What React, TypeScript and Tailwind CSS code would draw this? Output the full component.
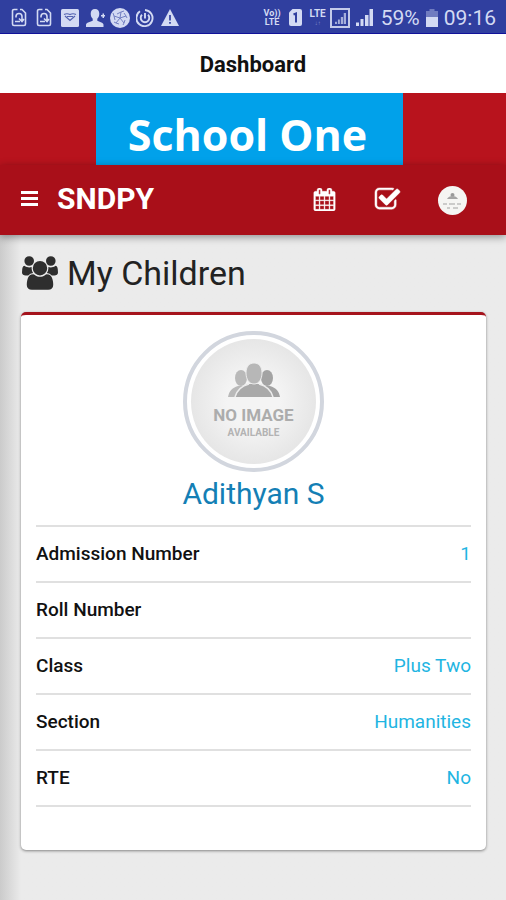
const details = [
  { label: "Admission Number", value: "1" },
  { label: "Roll Number", value: "" },
  { label: "Class", value: "Plus Two" },
  { label: "Section", value: "Humanities" },
  { label: "RTE", value: "No" },
];

function SyncDocIcon() {
  return (
    <svg viewBox="0 0 16 19" className="h-[19px] w-4" fill="none" stroke="currentColor" strokeWidth="1.6">
      <path d="M6.500 1.500H3a1.500 1.500 0 0 0-1.500 1.500v13A1.500 1.500 0 0 0 3 17.500h10a1.500 1.500 0 0 0 1.500-1.500V5L11 1.500H9" />
      <path d="M5 9.500V8.500a3 3 0 0 1 6 0v4M8 10.500l3 3 2-2.500M4 13.500h5" />
    </svg>
  );
}

function MailIcon() {
  return (
    <svg viewBox="0 0 18 18" className="size-[18px]">
      <rect width="18" height="18" rx="1.500" fill="currentColor" />
      <path d="M3 5.500c3-1.500 4-1 6 0 2-1 3-1.500 6 0M4 7l5 4.500L14 7M6 7.500h6" fill="none" stroke="#5362b0" strokeWidth="1.200" />
    </svg>
  );
}

function AddPersonIcon() {
  return (
    <svg viewBox="0 0 19 18" className="h-[18px] w-[19px]" fill="currentColor">
      <path d="M9 0c2.800 0 4.300 2 4.300 4.800 0 2.200-.8 4-2 5v1.900l4.700 2.100c1 .5 1.500 1.200 1.500 2.200v2H0v-2c0-1 .5-1.700 1.500-2.200l5.200-2.100V9.800c-1.200-1-2-2.800-2-5C4.700 2 6.200 0 9 0Z" />
      <path d="M15 6h1.500V4.500H18V6h1v1.500h-1V9h-1.500V7.500H15Z" />
    </svg>
  );
}

function BallIcon() {
  return (
    <svg viewBox="0 0 20 20" className="size-5">
      <circle cx="10" cy="10" r="10" fill="currentColor" />
      <path d="M10 10 11 4l3-1M10 10l6-2 1 2M10 10l4 5-1 2M10 10l-4 5-2-1M10 10 4 8 3 5M7 6l4-2M14 5l2 3M15 12l-1 3M9 16l-3-1M5 12 4 8" fill="none" stroke="#7380c2" strokeWidth="1" />
    </svg>
  );
}

function PowerIcon() {
  return (
    <svg viewBox="0 0 18 18" className="size-[18px]" fill="none" stroke="currentColor" strokeWidth="1.900">
      <path d="M4 2.300A8.100 8.100 0 1 0 9 1" />
      <path d="M6 5.800a4.300 4.300 0 1 0 6 0M9 4v5.500" />
    </svg>
  );
}

function WarningIcon() {
  return (
    <svg viewBox="0 0 18 17" className="h-[17px] w-[18px]">
      <path d="M9 0 18 17H0Z" fill="currentColor" />
      <path d="M9 6v5.500M9 13v1.800" stroke="#303f9f" strokeWidth="1.700" />
    </svg>
  );
}

function SignalBars({ className }: { className: string }) {
  return (
    <svg viewBox="0 0 17 17" className={className} fill="currentColor">
      <path d="M0 13.500h3V17H0ZM4.500 10h3v7h-3ZM9 6h3.500v11H9ZM13.500 0H17v17h-3.500Z" />
    </svg>
  );
}

function SimIcon() {
  return (
    <svg viewBox="0 0 13 17" className="h-[17px] w-[13px]">
      <path d="M3.500 0H11a2 2 0 0 1 2 2v13a2 2 0 0 1-2 2H2a2 2 0 0 1-2-2V3.500Z" fill="currentColor" />
      <path d="M4.500 5.500 7 4.500v9" fill="none" stroke="#303f9f" strokeWidth="2" />
    </svg>
  );
}

function BatteryIcon() {
  return (
    <svg viewBox="0 0 12 18" className="h-[18px] w-3" fill="currentColor">
      <path d="M3.500 0h5v2H12v6H0V2h3.500Z" opacity=".4" />
      <path d="M0 8h12v10H0Z" />
    </svg>
  );
}

function StatusBar() {
  return (
    <div className="flex h-[34px] items-center justify-between border-b border-[#11129a] bg-[#303f9f] pr-[10px] pl-[11px] text-[#d3daf3]">
      <div className="flex items-center gap-[7px] pt-0.5">
        <SyncDocIcon />
        <span className="ml-0.5 flex"><SyncDocIcon /></span>
        <span className="ml-0.5 flex"><MailIcon /></span>
        <AddPersonIcon />
        <span className="-ml-0.5 flex"><BallIcon /></span>
        <span className="-ml-px flex"><PowerIcon /></span>
        <WarningIcon />
      </div>
      <div className="flex items-center pt-0.5">
        <div className="text-center text-[9px] leading-[9px] font-bold">
          <div>Vo))</div>
          <div>LTE</div>
        </div>
        <span className="ml-2 flex"><SimIcon /></span>
        <div className="ml-2 text-center text-[10px] leading-[10px] font-bold">
          <div>LTE</div>
          <div className="text-[6px] leading-[8px] opacity-50">↓↑</div>
        </div>
        <div className="ml-1 flex size-5 items-end justify-end border-2 border-current p-0.5 opacity-90">
          <SignalBars className="size-[11px] opacity-80" />
        </div>
        <span className="ml-1.5 flex"><SignalBars className="size-[17px]" /></span>
        <span className="ml-2 text-[21px] leading-6">59%</span>
        <span className="ml-1.5 flex"><BatteryIcon /></span>
        <span className="ml-1.5 text-[21px] leading-6">09:16</span>
      </div>
    </div>
  );
}

function NavIcon({ label, path, className }: { label: string; path: string; className: string }) {
  return (
    <button type="button" aria-label={label} className="flex">
      <svg viewBox="0 0 1792 1792" className={className} fill="currentColor" stroke="currentColor" strokeWidth="30">
        <path d={path} />
      </svg>
    </button>
  );
}

const calendarPath =
  "M192 1664h288v-288h-288v288zm352 0h320v-288h-320v288zm-352-352h288v-320h-288v320zm352 0h320v-320h-320v320zm-352-384h288v-288h-288v288zm736 736h320v-288h-320v288zm-384-736h320v-288h-320v288zm768 736h288v-288h-288v288zm-384-352h320v-320h-320v320zm-352-864v-288q0-13-9.500-22.500t-22.500-9.500h-64q-13 0-22.500 9.500t-9.500 22.500v288q0 13 9.500 22.500t22.500 9.500h64q13 0 22.500-9.500t9.500-22.500zm736 864h288v-320h-288v320zm-384-384h320v-288h-320v288zm384 0h288v-288h-288v288zm32-480v-288q0-13-9.500-22.500t-22.500-9.500h-64q-13 0-22.500 9.500t-9.500 22.500v288q0 13 9.500 22.500t22.500 9.500h64q13 0 22.500-9.500t9.500-22.500zm384-64v1280q0 52-38 90t-90 38h-1408q-52 0-90-38t-38-90v-1280q0-52 38-90t90-38h128v-96q0-66 47-113t113-47h64q66 0 113 47t47 113v96h384v-96q0-66 47-113t113-47h64q66 0 113 47t47 113v96h128q52 0 90 38t38 90z";

const checkPath =
  "M1472 930v318q0 119-84.500 203.500t-203.500 84.500h-832q-119 0-203.500-84.500t-84.500-203.500v-832q0-119 84.500-203.500t203.500-84.500h832q63 0 117 25 15 7 18 23 3 17-9 29l-49 49q-10 10-23 10-3 0-9-2-23-6-45-6h-832q-66 0-113 47t-47 113v832q0 66 47 113t113 47h832q66 0 113-47t47-113v-254q0-13 9-22l64-64q10-10 23-10 6 0 12 3 20 8 20 29zm231-489l-814 814q-24 24-57 24t-57-24l-430-430q-24-24-24-57t24-57l110-110q24-24 57-24t57 24l263 263 647-647q24-24 57-24t57 24l110 110q24 24 24 57t-24 57z";

const groupPath =
  "M593 896q-162 5-265 128h-134q-82 0-138-40.500t-56-118.500q0-353 124-353 6 0 43.500 21t97.500 42.500 119 21.500q67 0 133-23-5 37-5 66 0 139 81 256zm1071 637q0 120-73 189.500t-194 69.500h-874q-121 0-194-69.500t-73-189.500q0-53 3.500-103.500t14-109 26.500-108.500 43-97.500 62-81 85.500-53.500 111.500-20q10 0 43 21.500t73 48 107 48 135 21.500 135-21.500 107-48 73-48 43-21.500q61 0 111.500 20t85.500 53.500 62 81 43 97.500 26.500 108.500 14 109 3.500 103.500zm-1024-1277q0 106-75 181t-181 75-181-75-75-181 75-181 181-75 181 75 75 181zm704 384q0 159-112.500 271.500t-271.500 112.500-271.500-112.500-112.500-271.500 112.500-271.500 271.500-112.500 271.500 112.500 112.500 271.500zm576 225q0 78-56 118.500t-138 40.500h-134q-103-123-265-128 81-117 81-256 0-29-5-66 66 23 133 23 59 0 119-21.500t97.500-42.500 43.500-21q124 0 124 353zm-128-609q0 106-75 181t-181 75-181-75-75-181 75-181 181-75 181 75 75 181z";

function PeopleGlyph({ className }: { className: string }) {
  return (
    <svg viewBox="0 0 54 36" className={className}>
      <g fill="#b9b9b9">
        <ellipse cx="14" cy="15" rx="6" ry="8" />
        <path d="M1 34c1-6 4-9 10-11h7v11Z" />
      </g>
      <g fill="#a3a3a3">
        <ellipse cx="40" cy="15" rx="6" ry="8" />
        <path d="M53 34c-1-6-4-9-10-11h-7v11Z" />
      </g>
      <path d="M8 34c2-7 6-11 14-13h10c8 2 12 6 14 13Z" fill="#a9a9a9" />
      <path d="M8 34c2-7 6-11 14-13M32 21c8 2 12 6 14 13" fill="none" stroke="#ececec" strokeWidth="1.500" />
      <path d="M27 0c5 0 8 4 8 10 0 6-3 11-8 11s-8-5-8-11c0-6 3-10 8-10Z" fill="#b7b7b7" stroke="#ececec" strokeWidth="1" />
    </svg>
  );
}

function Avatar() {
  return (
    <div className="size-[141px] rounded-full border-4 border-[#d2d6de] bg-white p-1">
      <div className="flex size-full flex-col items-center rounded-full bg-radial from-[#f4f4f4] from-30% to-[#dcdcdc] pt-6 font-bold">
        <PeopleGlyph className="h-[36px] w-[54px]" />
        <div className="mt-1.5 text-[17px] leading-5 text-[#acacac]">NO IMAGE</div>
        <div className="text-[10px] leading-4 text-[#b3b3b3]">AVAILABLE</div>
      </div>
    </div>
  );
}

export default function App() {
  return (
    <div className="flex min-h-screen flex-col bg-[#ebebeb] font-['Roboto',sans-serif] text-[#111]">
      <StatusBar />
      <div className="flex h-[59px] items-center justify-center bg-white pt-0.5">
        <h1 className="text-[22px] leading-7 font-bold text-[#111]">Dashboard</h1>
      </div>
      <div className="flex h-[72px] bg-[#b8131d] pr-[103px] pl-24">
        <div className="flex flex-1 items-center justify-center bg-[#01a1ea] pt-3 pr-1 font-['Open_Sans',sans-serif] text-[43px] leading-[60px] font-bold whitespace-nowrap text-white">
          School One
        </div>
      </div>
      <header className="relative flex h-[70px] items-center bg-[#a90f19] px-[21px] pb-0.5 text-white shadow-[0_2px_8px_rgba(0,0,0,0.4)]">
        <button type="button" aria-label="Menu" className="-mt-0.5 flex">
          <svg viewBox="0 0 17 15" className="h-[15px] w-[17px]" fill="currentColor">
            <path d="M0 0h17v3H0ZM0 6h17v3H0ZM0 12h17v3H0Z" />
          </svg>
        </button>
        <div className="ml-[19px] text-[30px] leading-9 font-bold">SNDPY</div>
        <div className="ml-auto flex items-center pr-[18px]">
          <NavIcon label="Calendar" path={calendarPath} className="size-[23px]" />
          <span className="ml-[38px] flex"><NavIcon label="Tasks" path={checkPath} className="size-[27px]" /></span>
          <button type="button" aria-label="Profile" className="mt-0.5 ml-[37px] flex rounded-full bg-[#f5f5f3]">
            <svg viewBox="0 0 29 29" className="size-[29px]">
              <circle cx="14.500" cy="9" r="2" fill="#999" />
              <path d="M9 13c1-2 3-3 5.500-3s4.500 1 5.500 3Z" fill="#a5a5a5" />
              <path d="M5 18h4M11 18h6M19 18h4M9 22h3M15 22h5" stroke="#bdbdbd" strokeWidth="1.300" />
            </svg>
          </button>
        </div>
      </header>
      <main className="flex-1 bg-linear-to-r from-[#cbcbcb] to-[#ebebeb] to-[21px] px-5 pb-[50px]">
        <h2 className="flex h-[77px] items-center gap-[9px] pb-0.5 pl-0.5 text-[34px] leading-10 font-normal text-[#222]">
          <svg viewBox="0 0 1920 1792" className="h-[34px] w-9" fill="#2e2e2e">
            <path d={groupPath} />
          </svg>
          My Children
        </h2>
        <section className="ml-px rounded-[5px] border-t-[3px] border-[#a5131c] bg-white px-[15px] pt-4 pb-[43px] shadow-[0_1px_3px_rgba(0,0,0,0.45)]">
          <div className="flex flex-col items-center">
            <Avatar />
            <a href="#adithyan" className="mt-0.5 mb-[11px] text-[30px] leading-10 text-[#147fb5]">
              Adithyan S
            </a>
          </div>
          <dl className="border-t-2 border-[#e0e0e0] text-[19px] leading-6">
            {details.map((row) => (
              <div key={row.label} className="flex h-14 items-center justify-between border-b-2 border-[#e0e0e0]">
                <dt className="font-medium text-[#111]">{row.label}</dt>
                <dd className="text-[#1fb5e2]">{row.value}</dd>
              </div>
            ))}
          </dl>
        </section>
      </main>
    </div>
  );
}
